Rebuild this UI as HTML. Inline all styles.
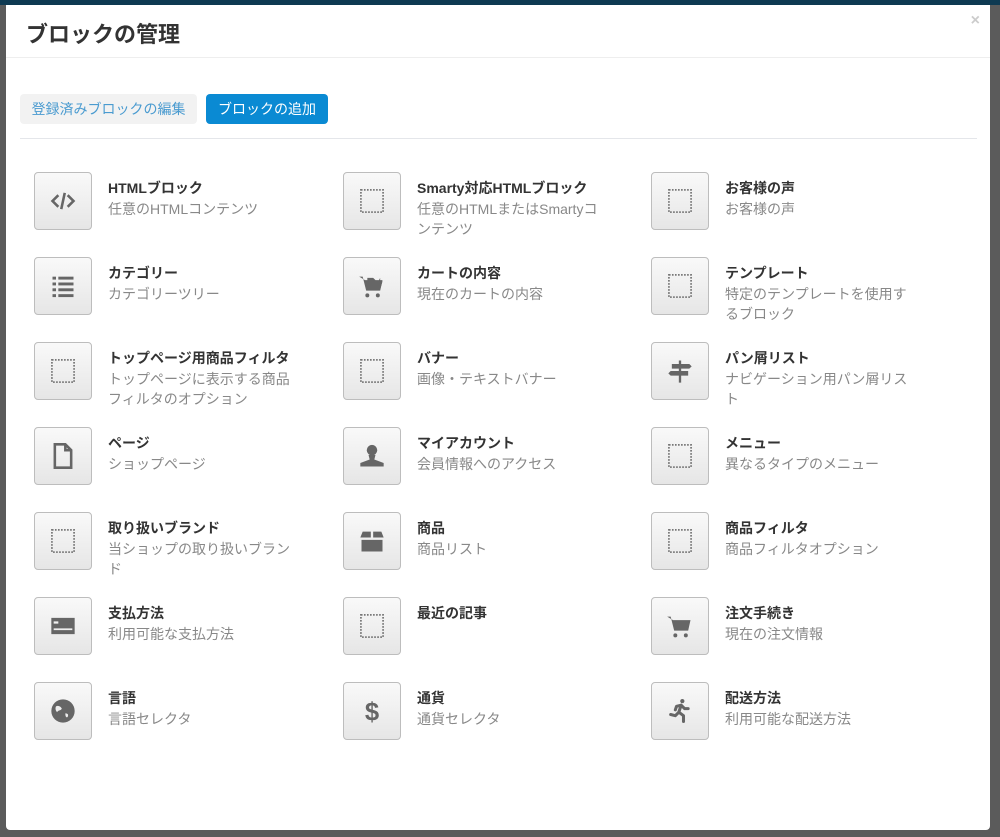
<!DOCTYPE html>
<html><head><meta charset="utf-8"><style>
*{margin:0;padding:0;box-sizing:border-box}
body{width:1000px;height:837px;overflow:hidden;background:#5b5b5b;font-family:"Liberation Sans","Noto Sans CJK JP",sans-serif;position:relative}
.top{position:absolute;left:0;top:0;width:1000px;height:5px;background:#0e3a52}
.modal{position:absolute;left:6px;top:5px;width:984px;height:825px;background:#fff;border-radius:0 0 4px 4px}
h1{position:absolute;left:20px;top:12px;font-size:22px;font-weight:bold;color:#333}
.x{position:absolute;right:10px;top:7px;color:#ccc;font-size:16px;font-weight:bold}
.hb{position:absolute;left:0;top:52px;width:984px;height:1px;background:#eee}
.b1{position:absolute;left:14px;top:89px;width:177px;height:30px;background:#f2f2f2;border-radius:4px;color:#4a9bd0;font-size:14px;line-height:30px;text-align:center}
.b2{position:absolute;left:200px;top:89px;width:122px;height:30px;background:#0a8ad3;border-radius:4px;color:#fff;font-size:14px;line-height:30px;text-align:center}
.sep{position:absolute;left:14px;top:133px;width:957px;height:1px;background:#e4e6ea}
.it{position:absolute;width:300px;height:60px}
.ic{position:absolute;left:0;top:0;width:58px;height:58px;border:1px solid #bdbdbd;border-radius:4px;background:linear-gradient(#f9f9f9,#e6e6e6);display:flex;align-items:center;justify-content:center}
.ic svg{width:28px;height:28px}
.t{position:absolute;left:74px;top:6px;font-size:14px;font-weight:bold;color:#333;line-height:20px}
.d{position:absolute;left:74px;top:27px;width:186px;font-size:14px;color:#888;line-height:20px;word-break:break-all}
</style></head><body>
<div class="top"></div>
<div class="modal">
<h1>ブロックの管理</h1><div class="x">×</div>
<div class="hb"></div>
<div class="b1">登録済みブロックの編集</div>
<div class="b2">ブロックの追加</div>
<div class="sep"></div>
</div>
<svg width="0" height="0" style="position:absolute"><defs>
<symbol id="dot" viewBox="0 0 24 24"><rect x="2.5" y="2.5" width="19" height="19" fill="none" stroke="#777" stroke-width="1.5" stroke-dasharray="1.4 1.2"/></symbol>
</defs></svg>
<div class="it" style="left:34px;top:172px"><div class="ic"><svg viewBox="0 0 24 24" fill="none" stroke="#666" stroke-width="2.2"><path d="M8 7l-5 5 5 5M16 7l5 5-5 5M13.5 5l-3 14"/></svg></div><div class="t">HTMLブロック</div><div class="d">任意のHTMLコンテンツ</div></div>
<div class="it" style="left:34px;top:257px"><div class="ic"><svg viewBox="0 0 24 24" fill="#666"><rect x="3" y="4" width="3" height="2.5"/><rect x="8" y="4" width="13" height="2.5"/><rect x="3" y="9" width="3" height="2.5"/><rect x="8" y="9" width="13" height="2.5"/><rect x="3" y="14" width="3" height="2.5"/><rect x="8" y="14" width="13" height="2.5"/><rect x="3" y="19" width="3" height="2.5"/><rect x="8" y="19" width="13" height="2.5"/></svg></div><div class="t">カテゴリー</div><div class="d">カテゴリーツリー</div></div>
<div class="it" style="left:34px;top:342px"><div class="ic"><svg><use href="#dot"/></svg></div><div class="t">トップページ用商品フィルタ</div><div class="d">トップページに表示する商品フィルタのオプション</div></div>
<div class="it" style="left:34px;top:427px"><div class="ic"><svg viewBox="0 0 24 24" fill="none" stroke="#666" stroke-width="2.2"><path d="M5 2h9l5 5v15H5z M14 2v5h5"/></svg></div><div class="t">ページ</div><div class="d">ショップページ</div></div>
<div class="it" style="left:34px;top:512px"><div class="ic"><svg><use href="#dot"/></svg></div><div class="t">取り扱いブランド</div><div class="d">当ショップの取り扱いブランド</div></div>
<div class="it" style="left:34px;top:597px"><div class="ic"><svg viewBox="0 0 24 24" fill="#666"><path d="M2 5h20v14H2z M4 8v2h4V8z M4 14v1.5h16V14z" fill-rule="evenodd"/></svg></div><div class="t">支払方法</div><div class="d">利用可能な支払方法</div></div>
<div class="it" style="left:34px;top:682px"><div class="ic"><svg viewBox="0 0 24 24"><circle cx="12" cy="12" r="10" fill="#666"/><path d="M6 8c2-1 4 0 5 2-1 2-3 1-4 3-1-1-2-3-1-5zM14 14c2 0 3 1 2 3-1 1-2 0-2-3z" fill="#eee"/></svg></div><div class="t">言語</div><div class="d">言語セレクタ</div></div>
<div class="it" style="left:343px;top:172px"><div class="ic"><svg><use href="#dot"/></svg></div><div class="t">Smarty対応HTMLブロック</div><div class="d">任意のHTMLまたはSmartyコンテンツ</div></div>
<div class="it" style="left:343px;top:257px"><div class="ic"><svg viewBox="0 0 24 24" fill="#666"><path d="M1 4h3l3 12h12l2-9H8V5h5l2 2h3l1-2v2H6z"/><circle cx="8" cy="20" r="1.7"/><circle cx="17" cy="20" r="1.7"/><path d="M7 8h14l-2 7H8z"/></svg></div><div class="t">カートの内容</div><div class="d">現在のカートの内容</div></div>
<div class="it" style="left:343px;top:342px"><div class="ic"><svg><use href="#dot"/></svg></div><div class="t">バナー</div><div class="d">画像・テキストバナー</div></div>
<div class="it" style="left:343px;top:427px"><div class="ic"><svg viewBox="0 0 24 24" fill="#666"><circle cx="12" cy="7" r="4.5"/><path d="M9 11h6l-1 4 8 3v3H2v-3l8-3z"/></svg></div><div class="t">マイアカウント</div><div class="d">会員情報へのアクセス</div></div>
<div class="it" style="left:343px;top:512px"><div class="ic"><svg viewBox="0 0 24 24" fill="#666"><path d="M4 4h7v5H2zM13 4h7l2 5h-9zM3 11h18v10H3z"/></svg></div><div class="t">商品</div><div class="d">商品リスト</div></div>
<div class="it" style="left:343px;top:597px"><div class="ic"><svg><use href="#dot"/></svg></div><div class="t">最近の記事</div></div>
<div class="it" style="left:343px;top:682px"><div class="ic"><svg viewBox="0 0 24 24"><text x="12" y="20" font-size="22" font-weight="bold" fill="#666" text-anchor="middle" font-family="Liberation Sans">$</text></svg></div><div class="t">通貨</div><div class="d">通貨セレクタ</div></div>
<div class="it" style="left:651px;top:172px"><div class="ic"><svg><use href="#dot"/></svg></div><div class="t">お客様の声</div><div class="d">お客様の声</div></div>
<div class="it" style="left:651px;top:257px"><div class="ic"><svg><use href="#dot"/></svg></div><div class="t">テンプレート</div><div class="d">特定のテンプレートを使用するブロック</div></div>
<div class="it" style="left:651px;top:342px"><div class="ic"><svg viewBox="0 0 24 24" fill="#666"><path d="M11 3h2v19h-2zM5 6h15l2 2-2 2H5zM4 12h15v4H4l-2-2z"/></svg></div><div class="t">パン屑リスト</div><div class="d">ナビゲーション用パン屑リスト</div></div>
<div class="it" style="left:651px;top:427px"><div class="ic"><svg><use href="#dot"/></svg></div><div class="t">メニュー</div><div class="d">異なるタイプのメニュー</div></div>
<div class="it" style="left:651px;top:512px"><div class="ic"><svg><use href="#dot"/></svg></div><div class="t">商品フィルタ</div><div class="d">商品フィルタオプション</div></div>
<div class="it" style="left:651px;top:597px"><div class="ic"><svg viewBox="0 0 24 24" fill="#666"><path d="M1 4h3l3 12h12l2-9H6z"/><circle cx="8" cy="20" r="1.7"/><circle cx="17" cy="20" r="1.7"/></svg></div><div class="t">注文手続き</div><div class="d">現在の注文情報</div></div>
<div class="it" style="left:651px;top:682px"><div class="ic"><svg viewBox="0 0 24 24" fill="none" stroke="#666" stroke-width="2.6" stroke-linecap="round" stroke-linejoin="round"><circle cx="14" cy="3.5" r="1.8" fill="#666" stroke="none"/><path d="M13 7l-2 6 4 3v5M11 13l-3 3-4-1M13 7l3 3h3M13 7l-4 1-1 3"/></svg></div><div class="t">配送方法</div><div class="d">利用可能な配送方法</div></div>
</body></html>
